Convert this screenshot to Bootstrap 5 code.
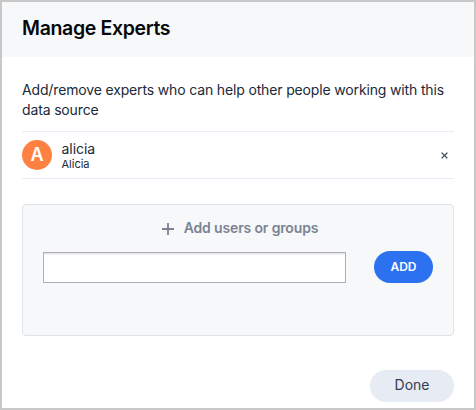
<!DOCTYPE html>
<html lang="en">
<head>
<meta charset="utf-8">
<meta name="viewport" content="width=device-width, initial-scale=1">
<title>Manage Experts</title>
<link href="https://cdn.jsdelivr.net/npm/bootstrap@5.3.0/dist/css/bootstrap.min.css" rel="stylesheet">
<style>
body{font-family:Inter,"Liberation Sans",sans-serif;color:#202939;font-size:14px;line-height:20px}
.dialog-frame{height:410px;border:2px solid #c8c8c8}
.dialog-head{height:55px;background:#f6f8fa;padding:0 20px}
.dialog-head h1{font-size:19.5px;line-height:24px;font-weight:600;color:#06080c;letter-spacing:-.35px;padding-bottom:4px}
.dialog-main{padding:23px 20px 0}
.intro{height:40px;margin-bottom:11px;letter-spacing:-.15px}
.expert{height:48px;border-top:1px solid #e6edf6;border-bottom:1px solid #e6edf6;padding-right:6px}
.avatar{width:30px;height:30px;background:#ff8142;font-size:18px;font-weight:600;padding-bottom:1px}
.who{margin-left:9.5px}
.who-name{font-size:14px;line-height:17px;letter-spacing:-.05px}
.who-full{font-size:11px;line-height:13px;padding-top:1px;margin-bottom:-1px}
.adder{margin-top:25px;height:132px;background:#f6f8fa;border:1px solid #dfe3eb;border-radius:4px;padding:14px 20px 0}
.adder-title{height:20px;font-weight:600;color:#7b8393;gap:10px;font-size:14px;padding-left:4px;letter-spacing:-.15px}
.adder-label{margin-top:-2px}
.adder-input{width:303px;height:31px;border:1px solid #adafb2;border-radius:0;box-shadow:inset 0 2px 2px -1px #d9dadd}
.btn-add{width:59px;height:32px;background:#2c72f0;color:#fff;font-size:12px;font-weight:600}
.done-row{margin-top:34px}
.btn-done{width:84px;height:32px;background:#e7ebf3;color:#333d50;font-size:14px}
.done-label{padding-bottom:3px}
</style>
<script src="https://cdn.jsdelivr.net/npm/bootstrap@5.3.0/dist/js/bootstrap.bundle.min.js"></script>
</head>
<body>
<div class="dialog-frame bg-white overflow-hidden">
  <header class="dialog-head d-flex align-items-center"><h1 class="m-0">Manage Experts</h1></header>
  <main class="dialog-main">
    <p class="intro text-nowrap">Add/remove experts who can help other people working with this<br>data source</p>
    <div class="expert d-flex align-items-center">
      <span class="avatar rounded-circle text-white d-flex align-items-center justify-content-center">A</span>
      <div class="who flex-grow-1"><div class="who-name">alicia</div><div class="who-full">Alicia</div></div>
      <button type="button" class="btn p-0 border-0 d-flex" aria-label="Remove alicia">
        <svg width="7" height="7" viewBox="0 0 7 7" stroke="#3c4554" stroke-width="1.3"><path d="M.6.6l5.8 5.8M6.4.6L.6 6.4"/></svg>
      </button>
    </div>
    <section class="adder">
      <div class="adder-title d-flex align-items-center justify-content-center">
        <svg width="12" height="12" viewBox="0 0 12 12" stroke="#7b8393" stroke-width="1.8"><path d="M6 0v12M0 6h12"/></svg>
        <span class="adder-label">Add users or groups</span>
      </div>
      <div class="adder-row d-flex align-items-center justify-content-between mt-2 pt-1">
        <input type="text" class="adder-input form-control" aria-label="Users or groups">
        <button type="button" class="btn btn-add rounded-pill border-0 p-0">ADD</button>
      </div>
    </section>
    <div class="done-row d-flex justify-content-end"><button type="button" class="btn btn-done rounded-pill border-0 p-0"><span class="done-label d-block">Done</span></button></div>
  </main>
</div>
</body>
</html>
